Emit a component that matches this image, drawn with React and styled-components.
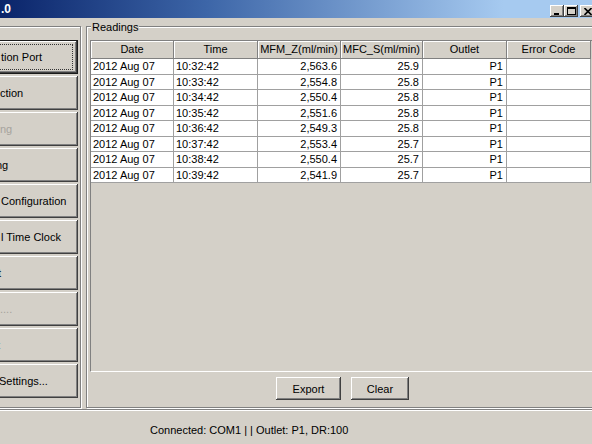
import React from "react";
import styled, { createGlobalStyle, css } from "styled-components";

const GlobalStyle = createGlobalStyle`
  html, body { margin: 0; padding: 0; background: #d4d0c8; overflow: hidden; }
  body { font-family: "Liberation Sans", Arial, sans-serif; font-size: 11px; color: #000; }
`;

const Window = styled.div`
  width: 592px;
  height: 444px;
  overflow: hidden;
  display: flex;
  flex-direction: column;
  background: #d4d0c8;
`;

const TitleBar = styled.div`
  height: 18px;
  flex: none;
  display: flex;
  align-items: flex-start;
  background: linear-gradient(90deg, #0a246a 0%, #3d66a8 35%, #a6caf0 85%, #a6caf0 100%);
`;

const TitleText = styled.div`
  flex: 1;
  color: #fff;
  font-weight: bold;
  font-size: 12px;
  line-height: 18px;
  padding-left: 1px;
`;

const Controls = styled.div`
  display: flex;
  margin-top: 5px;
  margin-right: -4px;
`;

const CaptionButton = styled.div`
  width: ${(p) => p.$w || 14}px;
  height: 12px;
  margin-left: ${(p) => p.$gap || 0}px;
  background: #d4d0c8;
  box-shadow: inset -1px -1px #404040, inset 1px 1px #fff, inset -2px -2px #808080;
  display: flex;
  align-items: center;
  justify-content: center;
`;

const Body = styled.div`
  flex: 1;
  display: flex;
  align-items: stretch;
  padding-top: 8px;
  padding-bottom: 1px;
  min-height: 0;
`;

const etched = css`
  box-sizing: border-box;
  border: 1px solid #808080;
  box-shadow: 1px 1px 0 #fff, inset 1px 1px 0 #fff;
`;

const SidePanel = styled.div`
  ${etched};
  flex: none;
  margin-left: -82px;
  width: 163px;
  padding: 13px 2px 0 3px;
  display: flex;
  flex-direction: column;
  gap: 2px;
`;

const raised = css`
  background: #d4d0c8;
  border: none;
  box-shadow: inset -1px -1px #404040, inset 1px 1px #fff, inset -2px -2px #808080;
  font-family: inherit;
  font-size: 11px;
  color: #000;
  margin: 0;
`;

const SideButton = styled.button`
  ${raised};
  position: relative;
  height: 34px;
  flex: none;
  box-sizing: border-box;
  text-align: left;
  white-space: nowrap;
  padding: 0 0 0 ${(p) => 78 + p.$x}px;
  color: ${(p) => (p.disabled ? "#a6a39d" : "#000")};
  ${(p) =>
    p.$default &&
    css`
      box-shadow: inset 0 0 0 1px #1a1a1a, inset -2px -2px #404040, inset 2px 2px #fff,
        inset -3px -3px #808080;
      &::after {
        content: "";
        position: absolute;
        inset: 4px 5px 4px 4px;
        border: 1px dotted #333;
      }
    `}
`;

const Readings = styled.div`
  ${etched};
  position: relative;
  flex: none;
  width: 510px;
  margin-left: 5px;
  padding: 13px 0 0 3px;
  display: flex;
  flex-direction: column;
`;

const Legend = styled.div`
  position: absolute;
  top: -6px;
  left: 4px;
  padding: 0 1px;
  line-height: 13px;
  background: #d4d0c8;
`;

const List = styled.div`
  flex: none;
  height: 332px;
  box-sizing: border-box;
  border-top: 1px solid #808080;
  border-left: 1px solid #808080;
  border-bottom: 1px solid #fff;
  border-right: 1px solid #fff;
  background: #d4d0c8;
  overflow: hidden;
`;

const Grid = styled.div`
  display: grid;
  grid-template-columns: 83px 84px 83px 82px 84px 84px;
  width: max-content;
`;

const HeadCell = styled.div`
  height: 18px;
  box-sizing: border-box;
  border-right: 1px solid #808080;
  border-bottom: 1px solid #808080;
  box-shadow: inset 1px 1px #fff;
  text-align: center;
  line-height: 17px;
  white-space: nowrap;
  overflow: hidden;
`;

const Cell = styled.div`
  height: 15.5px;
  box-sizing: border-box;
  border-right: 1px solid #a0a0a0;
  border-bottom: 1px solid #a0a0a0;
  background: #fff;
  line-height: 14.5px;
  padding: 0 ${(p) => (p.$right ? 3 : 1)}px 0 ${(p) => (p.$right ? 0 : 2)}px;
  text-align: ${(p) => (p.$right ? "right" : "left")};
  white-space: nowrap;
  overflow: hidden;
`;

const ButtonRow = styled.div`
  display: flex;
  justify-content: center;
  gap: 10px;
  margin-top: 5px;
`;

const PushButton = styled.button`
  ${raised};
  width: ${(p) => p.$w}px;
  height: 23px;
  padding: 0;
  text-align: center;
`;

const StatusBar = styled.div`
  flex: none;
  height: 35px;
  box-sizing: border-box;
  border-top: 1px solid #808080;
  box-shadow: inset 0 1px #fff;
  display: flex;
  align-items: center;
  padding: 5px 0 0 150px;
  white-space: nowrap;
`;

const sideButtons = [
  { label: "tion Port", x: 1, def: true },
  { label: "ction", x: 0 },
  { label: "ng", x: 0, disabled: true },
  { label: "ng", x: -4 },
  { label: "Configuration", x: 1 },
  { label: "l Time Clock", x: 1 },
  { label: "t", x: -2 },
  { label: "....", x: 0, disabled: true },
  { label: "t", x: -3 },
  { label: "Settings...", x: -1 },
];

const headers = ["Date", "Time", "MFM_Z(ml/min)", "MFC_S(ml/min)", "Outlet", "Error Code"];

const rows = [
  ["10:32:42", "2,563.6", "25.9"],
  ["10:33:42", "2,554.8", "25.8"],
  ["10:34:42", "2,550.4", "25.8"],
  ["10:35:42", "2,551.6", "25.8"],
  ["10:36:42", "2,549.3", "25.8"],
  ["10:37:42", "2,553.4", "25.7"],
  ["10:38:42", "2,550.4", "25.7"],
  ["10:39:42", "2,541.9", "25.7"],
];

export default function App() {
  return (
    <Window>
      <GlobalStyle />
      <TitleBar>
        <TitleText>.0</TitleText>
        <Controls>
          <CaptionButton>
            <svg width="8" height="8" viewBox="0 0 8 8">
              <rect x="1" y="6" width="5" height="2" fill="#000" />
            </svg>
          </CaptionButton>
          <CaptionButton>
            <svg width="9" height="8" viewBox="0 0 9 8">
              <rect x="0.5" y="0.5" width="8" height="7" fill="none" stroke="#000" />
              <rect x="0" y="0" width="9" height="2" fill="#000" />
            </svg>
          </CaptionButton>
          <CaptionButton $w={16} $gap={2}>
            <svg width="8" height="7" viewBox="0 0 8 7">
              <path d="M0.5 0 L7.5 7 M7.5 0 L0.5 7" stroke="#000" strokeWidth="1.6" />
            </svg>
          </CaptionButton>
        </Controls>
      </TitleBar>
      <Body>
        <SidePanel>
          {sideButtons.map((b, i) => (
            <SideButton key={i} $x={b.x} $default={b.def} disabled={b.disabled}>
              {b.label}
            </SideButton>
          ))}
        </SidePanel>
        <Readings>
          <Legend>Readings</Legend>
          <List>
            <Grid>
              {headers.map((h) => (
                <HeadCell key={h}>{h}</HeadCell>
              ))}
              {rows.map((r, i) => (
                <React.Fragment key={i}>
                  <Cell>2012 Aug 07</Cell>
                  <Cell>{r[0]}</Cell>
                  <Cell $right>{r[1]}</Cell>
                  <Cell $right>{r[2]}</Cell>
                  <Cell $right>P1</Cell>
                  <Cell />
                </React.Fragment>
              ))}
            </Grid>
          </List>
          <ButtonRow>
            <PushButton $w={65}>Export</PushButton>
            <PushButton $w={58}>Clear</PushButton>
          </ButtonRow>
        </Readings>
      </Body>
      <StatusBar>Connected: COM1 | | Outlet: P1, DR:100</StatusBar>
    </Window>
  );
}
